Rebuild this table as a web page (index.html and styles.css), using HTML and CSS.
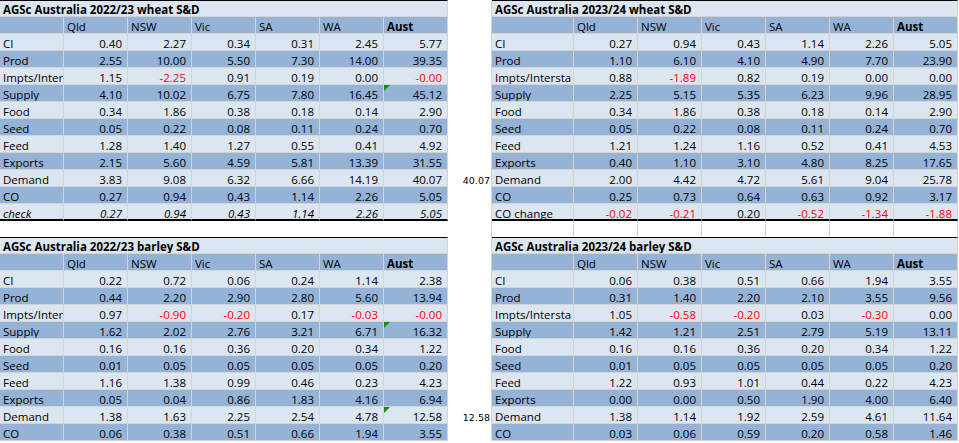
FILE: index.html
```html
<!DOCTYPE html>
<html lang="en">
<head>
<meta charset="utf-8">
<title>AGSc Australia S&amp;D</title>
<link rel="stylesheet" href="styles.css">
</head>
<body>
<div class="sheet">

  <div class="band">
    <section class="tbl tbl-l">
      <div class="title">AGSc Australia 2022/23 wheat S&amp;D</div>
      <div class="row dark hdr"><div class="c"></div><div class="c">Qld</div><div class="c">NSW</div><div class="c">Vic</div><div class="c">SA</div><div class="c">WA</div><div class="c b">Aust</div></div>
      <div class="row"><div class="c lbl">CI</div><div class="c">0.40</div><div class="c">2.27</div><div class="c">0.34</div><div class="c">0.31</div><div class="c">2.45</div><div class="c">5.77</div></div>
      <div class="row dark"><div class="c lbl">Prod</div><div class="c">2.55</div><div class="c">10.00</div><div class="c">5.50</div><div class="c">7.30</div><div class="c">14.00</div><div class="c">39.35</div></div>
      <div class="row"><div class="c lbl">Impts/Inter</div><div class="c">1.15</div><div class="c neg">-2.25</div><div class="c">0.91</div><div class="c">0.19</div><div class="c">0.00</div><div class="c neg">-0.00</div></div>
      <div class="row dark"><div class="c lbl">Supply</div><div class="c">4.10</div><div class="c">10.02</div><div class="c">6.75</div><div class="c">7.80</div><div class="c">16.45</div><div class="c flag">45.12</div></div>
      <div class="row"><div class="c lbl">Food</div><div class="c">0.34</div><div class="c">1.86</div><div class="c">0.38</div><div class="c">0.18</div><div class="c">0.14</div><div class="c">2.90</div></div>
      <div class="row dark"><div class="c lbl">Seed</div><div class="c">0.05</div><div class="c">0.22</div><div class="c">0.08</div><div class="c">0.11</div><div class="c">0.24</div><div class="c">0.70</div></div>
      <div class="row"><div class="c lbl">Feed</div><div class="c">1.28</div><div class="c">1.40</div><div class="c">1.27</div><div class="c">0.55</div><div class="c">0.41</div><div class="c">4.92</div></div>
      <div class="row dark"><div class="c lbl">Exports</div><div class="c">2.15</div><div class="c">5.60</div><div class="c">4.59</div><div class="c">5.81</div><div class="c">13.39</div><div class="c">31.55</div></div>
      <div class="row"><div class="c lbl">Demand</div><div class="c">3.83</div><div class="c">9.08</div><div class="c">6.32</div><div class="c">6.66</div><div class="c">14.19</div><div class="c">40.07</div></div>
      <div class="row dark"><div class="c lbl">CO</div><div class="c">0.27</div><div class="c">0.94</div><div class="c">0.43</div><div class="c">1.14</div><div class="c">2.26</div><div class="c">5.05</div></div>
      <div class="row last italic"><div class="c lbl">check</div><div class="c">0.27</div><div class="c">0.94</div><div class="c">0.43</div><div class="c">1.14</div><div class="c">2.26</div><div class="c">5.05</div></div>
    </section>

    <div class="gap gap-top">
      <div class="g">40.07</div>
    </div>

    <section class="tbl tbl-r">
      <div class="title">AGSc Australia 2023/24 wheat S&amp;D</div>
      <div class="row dark hdr"><div class="c"></div><div class="c">Qld</div><div class="c">NSW</div><div class="c">Vic</div><div class="c">SA</div><div class="c">WA</div><div class="c b">Aust</div></div>
      <div class="row"><div class="c lbl">CI</div><div class="c">0.27</div><div class="c">0.94</div><div class="c">0.43</div><div class="c">1.14</div><div class="c">2.26</div><div class="c">5.05</div></div>
      <div class="row dark"><div class="c lbl">Prod</div><div class="c">1.10</div><div class="c">6.10</div><div class="c">4.10</div><div class="c">4.90</div><div class="c">7.70</div><div class="c">23.90</div></div>
      <div class="row"><div class="c lbl">Impts/Intersta</div><div class="c">0.88</div><div class="c neg">-1.89</div><div class="c">0.82</div><div class="c">0.19</div><div class="c">0.00</div><div class="c">0.00</div></div>
      <div class="row dark"><div class="c lbl">Supply</div><div class="c">2.25</div><div class="c">5.15</div><div class="c">5.35</div><div class="c">6.23</div><div class="c">9.96</div><div class="c">28.95</div></div>
      <div class="row"><div class="c lbl">Food</div><div class="c">0.34</div><div class="c">1.86</div><div class="c">0.38</div><div class="c">0.18</div><div class="c">0.14</div><div class="c">2.90</div></div>
      <div class="row dark"><div class="c lbl">Seed</div><div class="c">0.05</div><div class="c">0.22</div><div class="c">0.08</div><div class="c">0.11</div><div class="c">0.24</div><div class="c">0.70</div></div>
      <div class="row"><div class="c lbl">Feed</div><div class="c">1.21</div><div class="c">1.24</div><div class="c">1.16</div><div class="c">0.52</div><div class="c">0.41</div><div class="c">4.53</div></div>
      <div class="row dark"><div class="c lbl">Exports</div><div class="c">0.40</div><div class="c">1.10</div><div class="c">3.10</div><div class="c">4.80</div><div class="c">8.25</div><div class="c">17.65</div></div>
      <div class="row"><div class="c lbl">Demand</div><div class="c">2.00</div><div class="c">4.42</div><div class="c">4.72</div><div class="c">5.61</div><div class="c">9.04</div><div class="c">25.78</div></div>
      <div class="row dark"><div class="c lbl">CO</div><div class="c">0.25</div><div class="c">0.73</div><div class="c">0.64</div><div class="c">0.63</div><div class="c">0.92</div><div class="c">3.17</div></div>
      <div class="row last"><div class="c lbl">CO change</div><div class="c neg">-0.02</div><div class="c neg">-0.21</div><div class="c">0.20</div><div class="c neg">-0.52</div><div class="c neg">-1.34</div><div class="c neg">-1.88</div></div>
    </section>
  </div>

  <div class="band spacer">
    <div class="blank-l"></div>
    <div class="gap"></div>
    <div class="tbl tbl-r">
      <div class="row blank"><div class="c"></div><div class="c"></div><div class="c"></div><div class="c"></div><div class="c"></div><div class="c"></div><div class="c"></div></div>
    </div>
  </div>

  <div class="band">
    <section class="tbl tbl-l">
      <div class="title">AGSc Australia 2022/23 barley S&amp;D</div>
      <div class="row dark hdr"><div class="c"></div><div class="c">Qld</div><div class="c">NSW</div><div class="c">Vic</div><div class="c">SA</div><div class="c">WA</div><div class="c b">Aust</div></div>
      <div class="row"><div class="c lbl">CI</div><div class="c">0.22</div><div class="c">0.72</div><div class="c">0.06</div><div class="c">0.24</div><div class="c">1.14</div><div class="c">2.38</div></div>
      <div class="row dark"><div class="c lbl">Prod</div><div class="c">0.44</div><div class="c">2.20</div><div class="c">2.90</div><div class="c">2.80</div><div class="c">5.60</div><div class="c">13.94</div></div>
      <div class="row"><div class="c lbl">Impts/Inter</div><div class="c">0.97</div><div class="c neg">-0.90</div><div class="c neg">-0.20</div><div class="c">0.17</div><div class="c neg">-0.03</div><div class="c neg">-0.00</div></div>
      <div class="row dark"><div class="c lbl">Supply</div><div class="c">1.62</div><div class="c">2.02</div><div class="c">2.76</div><div class="c">3.21</div><div class="c">6.71</div><div class="c flag">16.32</div></div>
      <div class="row"><div class="c lbl">Food</div><div class="c">0.16</div><div class="c">0.16</div><div class="c">0.36</div><div class="c">0.20</div><div class="c">0.34</div><div class="c">1.22</div></div>
      <div class="row dark"><div class="c lbl">Seed</div><div class="c">0.01</div><div class="c">0.05</div><div class="c">0.05</div><div class="c">0.05</div><div class="c">0.05</div><div class="c">0.20</div></div>
      <div class="row"><div class="c lbl">Feed</div><div class="c">1.16</div><div class="c">1.38</div><div class="c">0.99</div><div class="c">0.46</div><div class="c">0.23</div><div class="c">4.23</div></div>
      <div class="row dark"><div class="c lbl">Exports</div><div class="c">0.05</div><div class="c">0.04</div><div class="c">0.86</div><div class="c">1.83</div><div class="c">4.16</div><div class="c">6.94</div></div>
      <div class="row"><div class="c lbl">Demand</div><div class="c">1.38</div><div class="c">1.63</div><div class="c">2.25</div><div class="c">2.54</div><div class="c">4.78</div><div class="c flag">12.58</div></div>
      <div class="row dark"><div class="c lbl">CO</div><div class="c">0.06</div><div class="c">0.38</div><div class="c">0.51</div><div class="c">0.66</div><div class="c">1.94</div><div class="c">3.55</div></div>
    </section>

    <div class="gap gap-bottom">
      <div class="g">12.58</div>
    </div>

    <section class="tbl tbl-r">
      <div class="title">AGSc Australia 2023/24 barley S&amp;D</div>
      <div class="row dark hdr"><div class="c"></div><div class="c">Qld</div><div class="c">NSW</div><div class="c">Vic</div><div class="c">SA</div><div class="c">WA</div><div class="c b">Aust</div></div>
      <div class="row"><div class="c lbl">CI</div><div class="c">0.06</div><div class="c">0.38</div><div class="c">0.51</div><div class="c">0.66</div><div class="c">1.94</div><div class="c">3.55</div></div>
      <div class="row dark"><div class="c lbl">Prod</div><div class="c">0.31</div><div class="c">1.40</div><div class="c">2.20</div><div class="c">2.10</div><div class="c">3.55</div><div class="c">9.56</div></div>
      <div class="row"><div class="c lbl">Impts/Intersta</div><div class="c">1.05</div><div class="c neg">-0.58</div><div class="c neg">-0.20</div><div class="c">0.03</div><div class="c neg">-0.30</div><div class="c">0.00</div></div>
      <div class="row dark"><div class="c lbl">Supply</div><div class="c">1.42</div><div class="c">1.21</div><div class="c">2.51</div><div class="c">2.79</div><div class="c">5.19</div><div class="c">13.11</div></div>
      <div class="row"><div class="c lbl">Food</div><div class="c">0.16</div><div class="c">0.16</div><div class="c">0.36</div><div class="c">0.20</div><div class="c">0.34</div><div class="c">1.22</div></div>
      <div class="row dark"><div class="c lbl">Seed</div><div class="c">0.01</div><div class="c">0.05</div><div class="c">0.05</div><div class="c">0.05</div><div class="c">0.05</div><div class="c">0.20</div></div>
      <div class="row"><div class="c lbl">Feed</div><div class="c">1.22</div><div class="c">0.93</div><div class="c">1.01</div><div class="c">0.44</div><div class="c">0.22</div><div class="c">4.23</div></div>
      <div class="row dark"><div class="c lbl">Exports</div><div class="c">0.00</div><div class="c">0.00</div><div class="c">0.50</div><div class="c">1.90</div><div class="c">4.00</div><div class="c">6.40</div></div>
      <div class="row"><div class="c lbl">Demand</div><div class="c">1.38</div><div class="c">1.14</div><div class="c">1.92</div><div class="c">2.59</div><div class="c">4.61</div><div class="c">11.64</div></div>
      <div class="row dark"><div class="c lbl">CO</div><div class="c">0.03</div><div class="c">0.06</div><div class="c">0.59</div><div class="c">0.20</div><div class="c">0.58</div><div class="c">1.46</div></div>
    </section>
  </div>

</div>
</body>
</html>
```

FILE: styles.css
```css
* {
  box-sizing: border-box;
}

html, body {
  margin: 0;
  padding: 0;
  background: #ffffff;
}

body {
  font-family: "Open Sans", "Liberation Sans", sans-serif;
  font-size: 11.5px;
  color: #000000;
  width: 959px;
  height: 443px;
  overflow: hidden;
}

.sheet {
  display: flex;
  flex-direction: column;
}

.band {
  display: flex;
  align-items: flex-start;
}

.tbl {
  display: flex;
  flex-direction: column;
}

.tbl-l {
  width: 448px;
}

.tbl-r {
  width: 467px;
  border-left: 1px solid #d4d4d4;
}

.row {
  display: grid;
}

.tbl-l .row {
  grid-template-columns: repeat(7, 64px);
}

.tbl-r .row {
  grid-template-columns: 82px repeat(6, 64px);
}

.title {
  height: 17px;
  border-top: 1px solid #000000;
  border-right: 1px solid #d4d4d4;
  border-bottom: 1px solid #d4d4d4;
  background: #dce6f1;
  padding: 2px 3px 0 3px;
  line-height: 13px;
  font-weight: 700;
  white-space: nowrap;
  overflow: hidden;
}

.c {
  height: 17px;
  border-right: 1px solid #d4d4d4;
  border-bottom: 1px solid #d4d4d4;
  background: #dce6f1;
  padding: 3px 5px 0 3px;
  line-height: 13px;
  text-align: right;
  white-space: nowrap;
  overflow: hidden;
}

.row.dark .c {
  background: #95b3d7;
}

.c.lbl,
.hdr .c {
  text-align: left;
}

.c.b {
  font-weight: 700;
}

.c.neg {
  color: #ff0000;
}

.italic .c {
  font-style: italic;
}

.row.last .c {
  border-bottom: 2px solid #000000;
}

.c.flag {
  position: relative;
}

.c.flag::before {
  content: "";
  position: absolute;
  left: 0;
  top: 0;
  width: 0;
  height: 0;
  border-top: 6px solid #168a16;
  border-right: 6px solid transparent;
}

/* gap column between the two sheets */
.gap {
  width: 43px;
  display: grid;
  grid-template-rows: repeat(10, 17px) 17px;
}

.g {
  grid-row: 11;
  height: 17px;
  padding: 4px 1px 0 0;
  line-height: 13px;
  text-align: right;
  font-family: "DejaVu Sans", "Liberation Sans", sans-serif;
  font-size: 9.5px;
}

/* blank spacer row between top and bottom sheets */
.spacer {
  height: 16px;
}

.blank-l {
  width: 448px;
  height: 16px;
}

.spacer .gap {
  height: 16px;
  display: block;
}

.row.blank .c {
  height: 16px;
  background: #ffffff;
  border-bottom: none;
}

.band + .spacer + .band .title {
  border-top: 1px solid #000000;
}
```
